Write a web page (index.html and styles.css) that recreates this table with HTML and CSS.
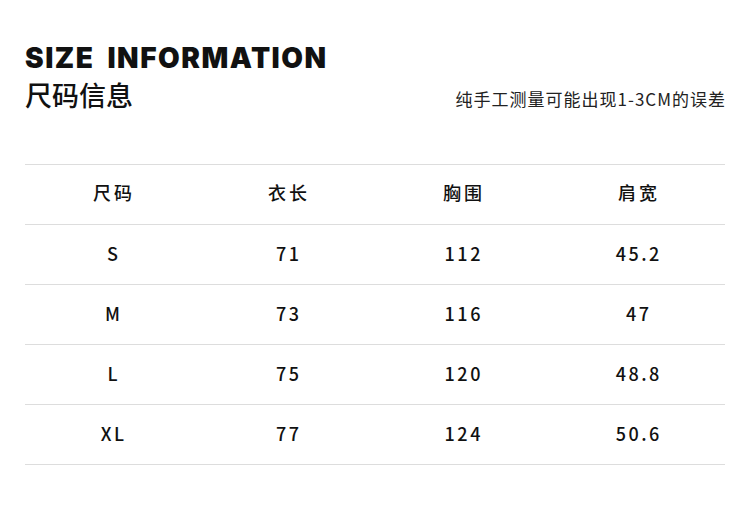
FILE: index.html
```html
<!DOCTYPE html>
<html lang="zh">
<head>
<meta charset="utf-8">
<link rel="stylesheet" href="styles.css">
</head>
<body>
<div class="page">
  <header class="head">
    <h1 class="title-en">SIZE INFORMATION</h1>
    <div class="sub">
      <h2 class="title-cn">尺码信息</h2>
      <p class="note">纯手工测量可能出现1-3CM的误差</p>
    </div>
  </header>
  <div class="table">
    <div class="row hdr"><span>尺码</span><span>衣长</span><span>胸围</span><span>肩宽</span></div>
    <div class="row"><span>S</span><span>71</span><span>112</span><span>45.2</span></div>
    <div class="row"><span>M</span><span>73</span><span>116</span><span>47</span></div>
    <div class="row"><span>L</span><span>75</span><span>120</span><span>48.8</span></div>
    <div class="row"><span>XL</span><span>77</span><span>124</span><span>50.6</span></div>
  </div>
</div>
</body>
</html>
```
FILE: styles.css
```css
* { margin: 0; padding: 0; box-sizing: border-box; }
html, body { background: #fff; }
body { width: 750px; height: 506px; overflow: hidden; font-family: "Noto Sans CJK SC", "Noto Sans", sans-serif; color: #111; }
.page { padding: 42px 25px 0 25px; }
.title-en {
  font-family: "Inter", "Noto Sans", sans-serif;
  font-weight: 900;
  font-size: 28px;
  line-height: 32px;
  letter-spacing: 1.5px;
  color: #111;
  word-spacing: 6px;
}
.sub { display: flex; justify-content: space-between; align-items: flex-end; margin-top: 4px; }
.title-cn { font-weight: 500; font-size: 27px; line-height: 34px; color: #111; }
.note { font-size: 17px; line-height: 20px; letter-spacing: 1px; margin-right: -1px; color: #222; margin-bottom: 3px; }
.table { margin-top: 52px; border-top: 1px solid #ddd; }
.row { display: grid; grid-template-columns: repeat(4, 1fr); height: 60px; border-bottom: 1px solid #ddd; align-items: center; }
.row span { text-align: center; font-size: 18px; line-height: 24px; font-weight: 500; letter-spacing: 2.5px; color: #111; padding-left: 2.5px; padding-bottom: 4px; }
.hdr span { letter-spacing: 3px; padding-left: 3px; padding-bottom: 5px; }
```
